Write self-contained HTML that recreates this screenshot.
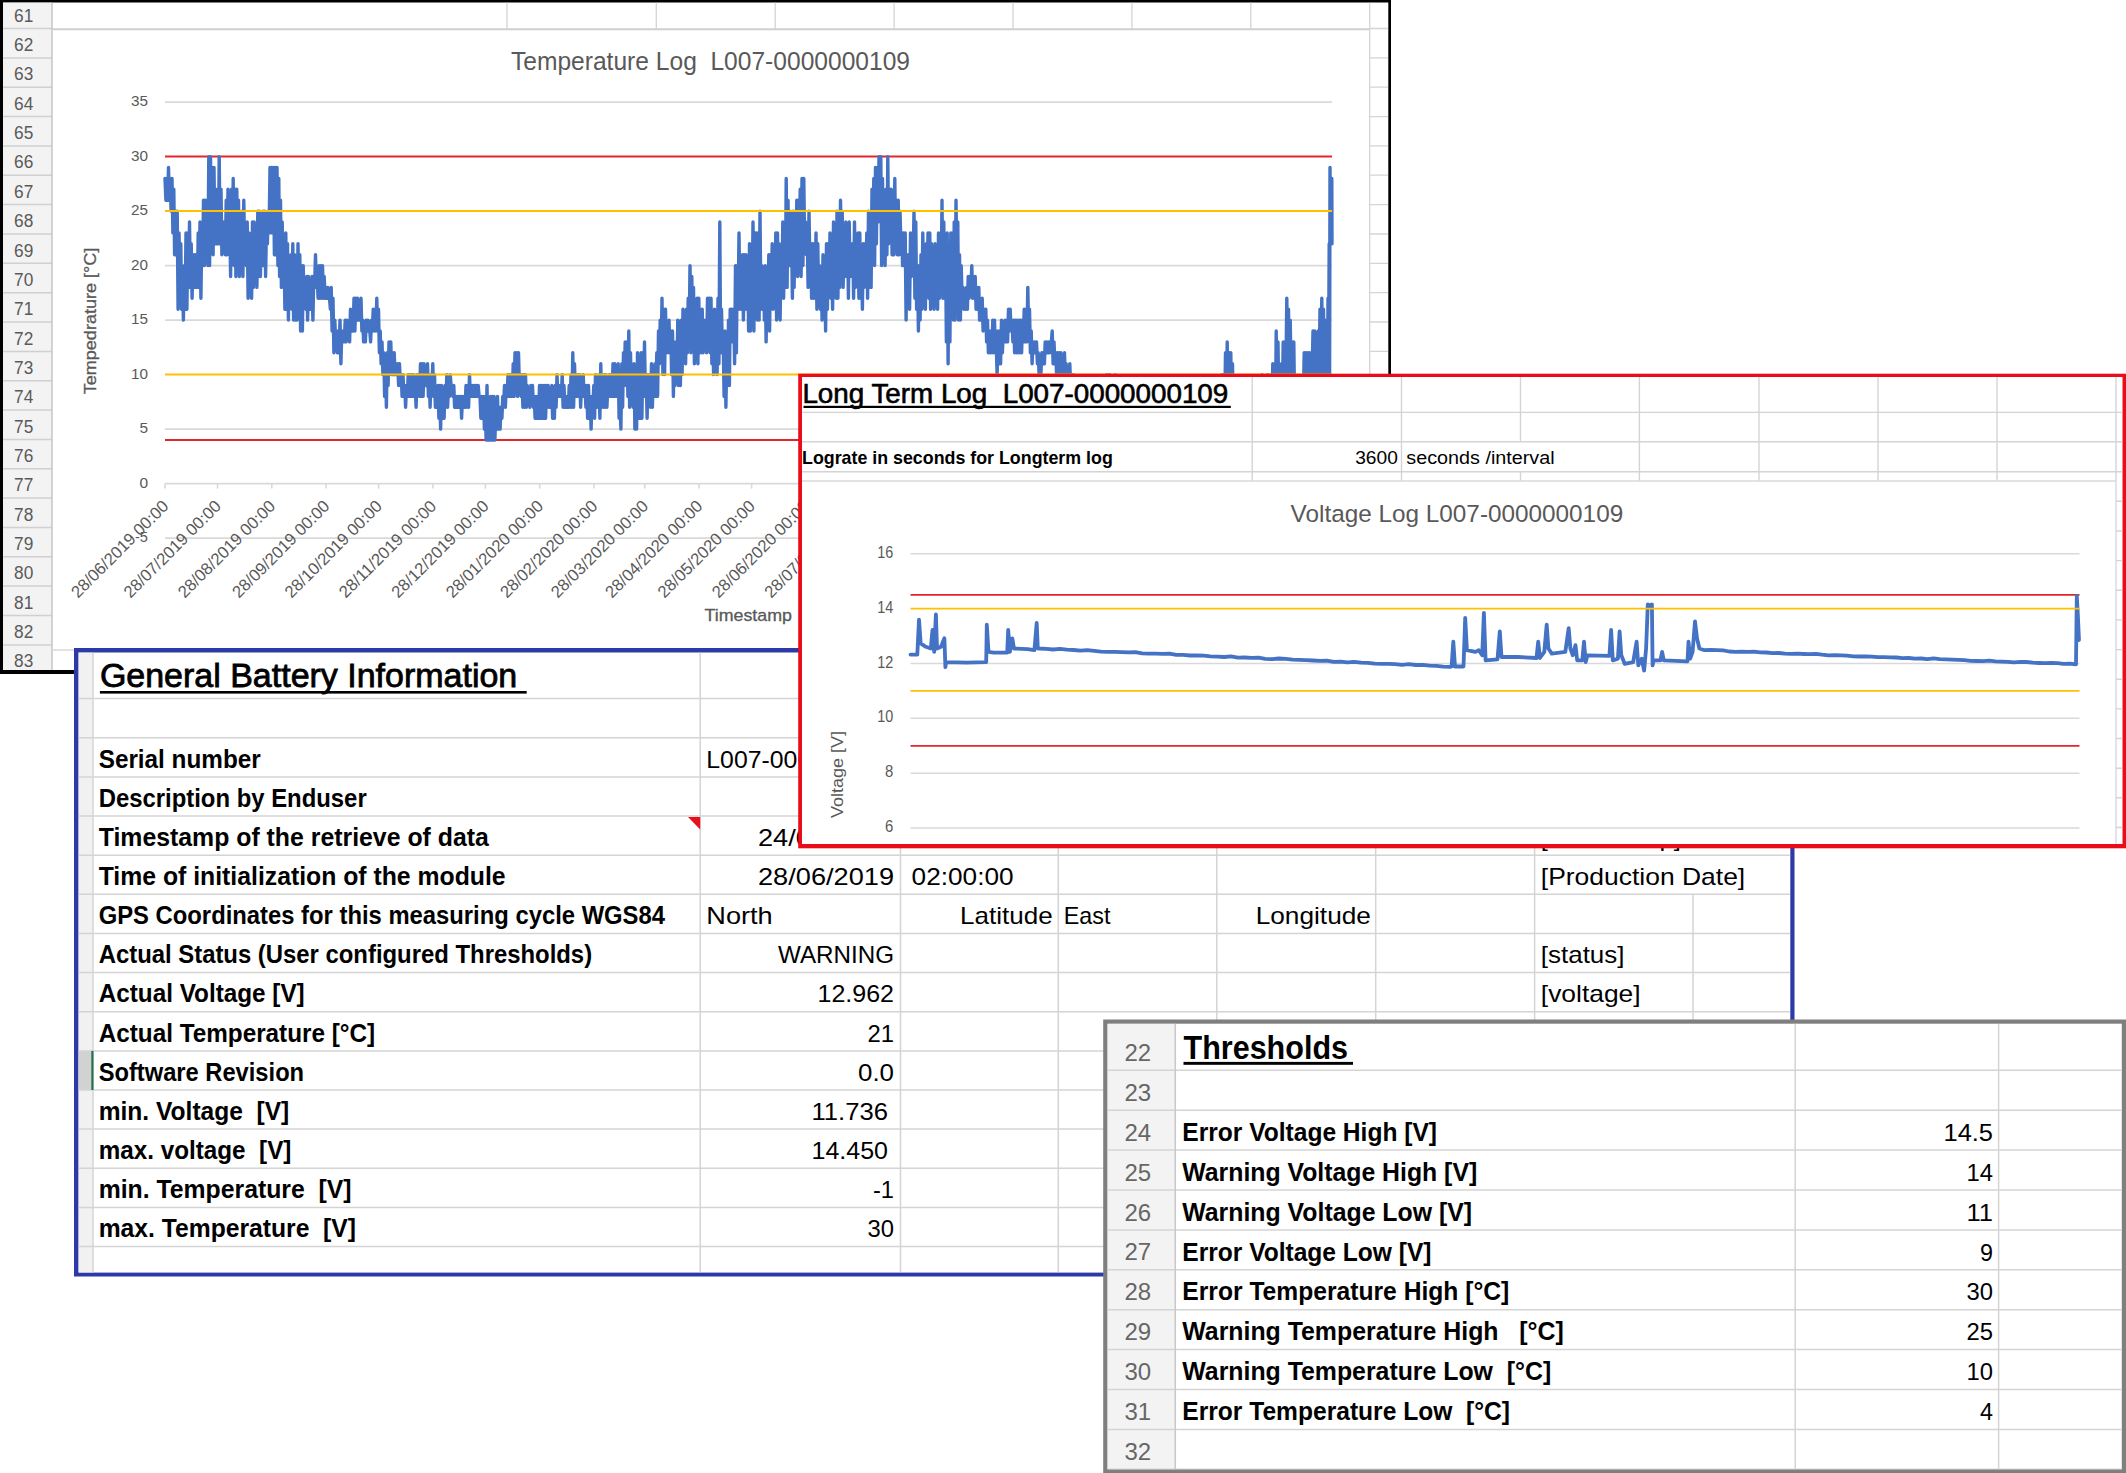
<!DOCTYPE html>
<html><head><meta charset="utf-8"><title>Battery Log</title>
<style>html,body{margin:0;padding:0;background:#fff}svg{display:block}text{white-space:pre;text-decoration-skip-ink:none}</style></head>
<body>
<svg width="2126" height="1473" viewBox="0 0 2126 1473" font-family="Liberation Sans, sans-serif" style="white-space:pre">
<defs>
<clipPath id="c1"><rect x="3" y="2.5" width="1385.3" height="667.5"/></clipPath>
<clipPath id="c2"><rect x="78.5" y="652.5" width="1711.8" height="620.1"/></clipPath>
<clipPath id="c3"><rect x="802" y="377" width="1320.5" height="467"/></clipPath>
<clipPath id="c4"><rect x="1107.5" y="1023.7" width="1014.3" height="445.6"/></clipPath>
</defs>
<rect x="0.0" y="0.0" width="2126.0" height="1473.0" fill="#fff"/>
<rect x="0.0" y="0.0" width="1391.0" height="674.0" fill="#000"/>
<rect x="3.0" y="2.5" width="1385.3" height="667.5" fill="#fff"/>
<g clip-path="url(#c1)">
<rect x="3.0" y="2.5" width="49.0" height="668.0" fill="#f3f3f3"/>
<line x1="3.0" y1="28.5" x2="52.0" y2="28.5" stroke="#d0d0d0" stroke-width="1.5"/>
<text x="23.7" y="21.7" font-size="18" text-anchor="middle" fill="#5a5a5a" textLength="19.2" lengthAdjust="spacingAndGlyphs">61</text>
<line x1="3.0" y1="57.9" x2="52.0" y2="57.9" stroke="#d0d0d0" stroke-width="1.5"/>
<text x="23.7" y="51.1" font-size="18" text-anchor="middle" fill="#5a5a5a" textLength="19.2" lengthAdjust="spacingAndGlyphs">62</text>
<line x1="3.0" y1="87.2" x2="52.0" y2="87.2" stroke="#d0d0d0" stroke-width="1.5"/>
<text x="23.7" y="80.4" font-size="18" text-anchor="middle" fill="#5a5a5a" textLength="19.2" lengthAdjust="spacingAndGlyphs">63</text>
<line x1="3.0" y1="116.6" x2="52.0" y2="116.6" stroke="#d0d0d0" stroke-width="1.5"/>
<text x="23.7" y="109.8" font-size="18" text-anchor="middle" fill="#5a5a5a" textLength="19.2" lengthAdjust="spacingAndGlyphs">64</text>
<line x1="3.0" y1="145.9" x2="52.0" y2="145.9" stroke="#d0d0d0" stroke-width="1.5"/>
<text x="23.7" y="139.1" font-size="18" text-anchor="middle" fill="#5a5a5a" textLength="19.2" lengthAdjust="spacingAndGlyphs">65</text>
<line x1="3.0" y1="175.2" x2="52.0" y2="175.2" stroke="#d0d0d0" stroke-width="1.5"/>
<text x="23.7" y="168.4" font-size="18" text-anchor="middle" fill="#5a5a5a" textLength="19.2" lengthAdjust="spacingAndGlyphs">66</text>
<line x1="3.0" y1="204.6" x2="52.0" y2="204.6" stroke="#d0d0d0" stroke-width="1.5"/>
<text x="23.7" y="197.8" font-size="18" text-anchor="middle" fill="#5a5a5a" textLength="19.2" lengthAdjust="spacingAndGlyphs">67</text>
<line x1="3.0" y1="234.0" x2="52.0" y2="234.0" stroke="#d0d0d0" stroke-width="1.5"/>
<text x="23.7" y="227.2" font-size="18" text-anchor="middle" fill="#5a5a5a" textLength="19.2" lengthAdjust="spacingAndGlyphs">68</text>
<line x1="3.0" y1="263.3" x2="52.0" y2="263.3" stroke="#d0d0d0" stroke-width="1.5"/>
<text x="23.7" y="256.5" font-size="18" text-anchor="middle" fill="#5a5a5a" textLength="19.2" lengthAdjust="spacingAndGlyphs">69</text>
<line x1="3.0" y1="292.7" x2="52.0" y2="292.7" stroke="#d0d0d0" stroke-width="1.5"/>
<text x="23.7" y="285.9" font-size="18" text-anchor="middle" fill="#5a5a5a" textLength="19.2" lengthAdjust="spacingAndGlyphs">70</text>
<line x1="3.0" y1="322.0" x2="52.0" y2="322.0" stroke="#d0d0d0" stroke-width="1.5"/>
<text x="23.7" y="315.2" font-size="18" text-anchor="middle" fill="#5a5a5a" textLength="19.2" lengthAdjust="spacingAndGlyphs">71</text>
<line x1="3.0" y1="351.4" x2="52.0" y2="351.4" stroke="#d0d0d0" stroke-width="1.5"/>
<text x="23.7" y="344.6" font-size="18" text-anchor="middle" fill="#5a5a5a" textLength="19.2" lengthAdjust="spacingAndGlyphs">72</text>
<line x1="3.0" y1="380.7" x2="52.0" y2="380.7" stroke="#d0d0d0" stroke-width="1.5"/>
<text x="23.7" y="373.9" font-size="18" text-anchor="middle" fill="#5a5a5a" textLength="19.2" lengthAdjust="spacingAndGlyphs">73</text>
<line x1="3.0" y1="410.1" x2="52.0" y2="410.1" stroke="#d0d0d0" stroke-width="1.5"/>
<text x="23.7" y="403.2" font-size="18" text-anchor="middle" fill="#5a5a5a" textLength="19.2" lengthAdjust="spacingAndGlyphs">74</text>
<line x1="3.0" y1="439.4" x2="52.0" y2="439.4" stroke="#d0d0d0" stroke-width="1.5"/>
<text x="23.7" y="432.6" font-size="18" text-anchor="middle" fill="#5a5a5a" textLength="19.2" lengthAdjust="spacingAndGlyphs">75</text>
<line x1="3.0" y1="468.8" x2="52.0" y2="468.8" stroke="#d0d0d0" stroke-width="1.5"/>
<text x="23.7" y="461.9" font-size="18" text-anchor="middle" fill="#5a5a5a" textLength="19.2" lengthAdjust="spacingAndGlyphs">76</text>
<line x1="3.0" y1="498.1" x2="52.0" y2="498.1" stroke="#d0d0d0" stroke-width="1.5"/>
<text x="23.7" y="491.3" font-size="18" text-anchor="middle" fill="#5a5a5a" textLength="19.2" lengthAdjust="spacingAndGlyphs">77</text>
<line x1="3.0" y1="527.5" x2="52.0" y2="527.5" stroke="#d0d0d0" stroke-width="1.5"/>
<text x="23.7" y="520.7" font-size="18" text-anchor="middle" fill="#5a5a5a" textLength="19.2" lengthAdjust="spacingAndGlyphs">78</text>
<line x1="3.0" y1="556.8" x2="52.0" y2="556.8" stroke="#d0d0d0" stroke-width="1.5"/>
<text x="23.7" y="550.0" font-size="18" text-anchor="middle" fill="#5a5a5a" textLength="19.2" lengthAdjust="spacingAndGlyphs">79</text>
<line x1="3.0" y1="586.1" x2="52.0" y2="586.1" stroke="#d0d0d0" stroke-width="1.5"/>
<text x="23.7" y="579.4" font-size="18" text-anchor="middle" fill="#5a5a5a" textLength="19.2" lengthAdjust="spacingAndGlyphs">80</text>
<line x1="3.0" y1="615.5" x2="52.0" y2="615.5" stroke="#d0d0d0" stroke-width="1.5"/>
<text x="23.7" y="608.7" font-size="18" text-anchor="middle" fill="#5a5a5a" textLength="19.2" lengthAdjust="spacingAndGlyphs">81</text>
<line x1="3.0" y1="644.9" x2="52.0" y2="644.9" stroke="#d0d0d0" stroke-width="1.5"/>
<text x="23.7" y="638.1" font-size="18" text-anchor="middle" fill="#5a5a5a" textLength="19.2" lengthAdjust="spacingAndGlyphs">82</text>
<line x1="3.0" y1="674.2" x2="52.0" y2="674.2" stroke="#d0d0d0" stroke-width="1.5"/>
<text x="23.7" y="667.4" font-size="18" text-anchor="middle" fill="#5a5a5a" textLength="19.2" lengthAdjust="spacingAndGlyphs">83</text>
<line x1="52.0" y1="2.5" x2="52.0" y2="670.0" stroke="#c6c6c6" stroke-width="1.5"/>
<line x1="507.0" y1="2.5" x2="507.0" y2="29.0" stroke="#d4d4d4" stroke-width="1.3"/>
<line x1="656.3" y1="2.5" x2="656.3" y2="29.0" stroke="#d4d4d4" stroke-width="1.3"/>
<line x1="775.2" y1="2.5" x2="775.2" y2="29.0" stroke="#d4d4d4" stroke-width="1.3"/>
<line x1="894.1" y1="2.5" x2="894.1" y2="29.0" stroke="#d4d4d4" stroke-width="1.3"/>
<line x1="1013.0" y1="2.5" x2="1013.0" y2="29.0" stroke="#d4d4d4" stroke-width="1.3"/>
<line x1="1131.9" y1="2.5" x2="1131.9" y2="29.0" stroke="#d4d4d4" stroke-width="1.3"/>
<line x1="1250.8" y1="2.5" x2="1250.8" y2="29.0" stroke="#d4d4d4" stroke-width="1.3"/>
<line x1="1369.7" y1="2.5" x2="1369.7" y2="670.0" stroke="#d4d4d4" stroke-width="1.3"/>
<line x1="1369.7" y1="28.5" x2="1388.3" y2="28.5" stroke="#d4d4d4" stroke-width="1.3"/>
<line x1="1369.7" y1="57.9" x2="1388.3" y2="57.9" stroke="#d4d4d4" stroke-width="1.3"/>
<line x1="1369.7" y1="87.2" x2="1388.3" y2="87.2" stroke="#d4d4d4" stroke-width="1.3"/>
<line x1="1369.7" y1="116.6" x2="1388.3" y2="116.6" stroke="#d4d4d4" stroke-width="1.3"/>
<line x1="1369.7" y1="145.9" x2="1388.3" y2="145.9" stroke="#d4d4d4" stroke-width="1.3"/>
<line x1="1369.7" y1="175.2" x2="1388.3" y2="175.2" stroke="#d4d4d4" stroke-width="1.3"/>
<line x1="1369.7" y1="204.6" x2="1388.3" y2="204.6" stroke="#d4d4d4" stroke-width="1.3"/>
<line x1="1369.7" y1="234.0" x2="1388.3" y2="234.0" stroke="#d4d4d4" stroke-width="1.3"/>
<line x1="1369.7" y1="263.3" x2="1388.3" y2="263.3" stroke="#d4d4d4" stroke-width="1.3"/>
<line x1="1369.7" y1="292.7" x2="1388.3" y2="292.7" stroke="#d4d4d4" stroke-width="1.3"/>
<line x1="1369.7" y1="322.0" x2="1388.3" y2="322.0" stroke="#d4d4d4" stroke-width="1.3"/>
<line x1="1369.7" y1="351.4" x2="1388.3" y2="351.4" stroke="#d4d4d4" stroke-width="1.3"/>
<line x1="1369.7" y1="380.7" x2="1388.3" y2="380.7" stroke="#d4d4d4" stroke-width="1.3"/>
<line x1="1369.7" y1="410.1" x2="1388.3" y2="410.1" stroke="#d4d4d4" stroke-width="1.3"/>
<line x1="1369.7" y1="439.4" x2="1388.3" y2="439.4" stroke="#d4d4d4" stroke-width="1.3"/>
<line x1="1369.7" y1="468.8" x2="1388.3" y2="468.8" stroke="#d4d4d4" stroke-width="1.3"/>
<line x1="1369.7" y1="498.1" x2="1388.3" y2="498.1" stroke="#d4d4d4" stroke-width="1.3"/>
<line x1="1369.7" y1="527.5" x2="1388.3" y2="527.5" stroke="#d4d4d4" stroke-width="1.3"/>
<line x1="1369.7" y1="556.8" x2="1388.3" y2="556.8" stroke="#d4d4d4" stroke-width="1.3"/>
<line x1="1369.7" y1="586.1" x2="1388.3" y2="586.1" stroke="#d4d4d4" stroke-width="1.3"/>
<line x1="1369.7" y1="615.5" x2="1388.3" y2="615.5" stroke="#d4d4d4" stroke-width="1.3"/>
<line x1="1369.7" y1="644.9" x2="1388.3" y2="644.9" stroke="#d4d4d4" stroke-width="1.3"/>
<line x1="1369.7" y1="674.2" x2="1388.3" y2="674.2" stroke="#d4d4d4" stroke-width="1.3"/>
<line x1="52.0" y1="29.3" x2="1369.7" y2="29.3" stroke="#cfcfcf" stroke-width="2"/>
<line x1="52.0" y1="650.0" x2="1369.7" y2="650.0" stroke="#d9d9d9" stroke-width="1.3"/>
<line x1="165.0" y1="102.1" x2="1332.0" y2="102.1" stroke="#d9d9d9" stroke-width="1.6"/>
<line x1="165.0" y1="265.6" x2="1332.0" y2="265.6" stroke="#d9d9d9" stroke-width="1.6"/>
<line x1="165.0" y1="320.1" x2="1332.0" y2="320.1" stroke="#d9d9d9" stroke-width="1.6"/>
<line x1="165.0" y1="429.1" x2="1332.0" y2="429.1" stroke="#d9d9d9" stroke-width="1.6"/>
<line x1="165.0" y1="483.6" x2="1332.0" y2="483.6" stroke="#d9d9d9" stroke-width="1.6"/>
<line x1="165.0" y1="538.1" x2="1332.0" y2="538.1" stroke="#d9d9d9" stroke-width="1.6"/>
<text x="148.0" y="106.0" font-size="15.5" text-anchor="end" fill="#595959" textLength="17.0" lengthAdjust="spacingAndGlyphs">35</text>
<text x="148.0" y="160.5" font-size="15.5" text-anchor="end" fill="#595959" textLength="17.0" lengthAdjust="spacingAndGlyphs">30</text>
<text x="148.0" y="215.0" font-size="15.5" text-anchor="end" fill="#595959" textLength="17.0" lengthAdjust="spacingAndGlyphs">25</text>
<text x="148.0" y="269.5" font-size="15.5" text-anchor="end" fill="#595959" textLength="17.0" lengthAdjust="spacingAndGlyphs">20</text>
<text x="148.0" y="324.0" font-size="15.5" text-anchor="end" fill="#595959" textLength="17.0" lengthAdjust="spacingAndGlyphs">15</text>
<text x="148.0" y="378.5" font-size="15.5" text-anchor="end" fill="#595959" textLength="17.0" lengthAdjust="spacingAndGlyphs">10</text>
<text x="148.0" y="433.0" font-size="15.5" text-anchor="end" fill="#595959" textLength="8.6" lengthAdjust="spacingAndGlyphs">5</text>
<text x="148.0" y="487.5" font-size="15.5" text-anchor="end" fill="#595959" textLength="8.6" lengthAdjust="spacingAndGlyphs">0</text>
<text x="148.0" y="542.0" font-size="15.5" text-anchor="end" fill="#595959" textLength="13.0" lengthAdjust="spacingAndGlyphs">-5</text>
<line x1="165.0" y1="483.6" x2="165.0" y2="488.6" stroke="#d9d9d9" stroke-width="1.6"/>
<line x1="217.5" y1="483.6" x2="217.5" y2="488.6" stroke="#d9d9d9" stroke-width="1.6"/>
<line x1="271.8" y1="483.6" x2="271.8" y2="488.6" stroke="#d9d9d9" stroke-width="1.6"/>
<line x1="326.1" y1="483.6" x2="326.1" y2="488.6" stroke="#d9d9d9" stroke-width="1.6"/>
<line x1="378.6" y1="483.6" x2="378.6" y2="488.6" stroke="#d9d9d9" stroke-width="1.6"/>
<line x1="432.9" y1="483.6" x2="432.9" y2="488.6" stroke="#d9d9d9" stroke-width="1.6"/>
<line x1="485.4" y1="483.6" x2="485.4" y2="488.6" stroke="#d9d9d9" stroke-width="1.6"/>
<line x1="539.7" y1="483.6" x2="539.7" y2="488.6" stroke="#d9d9d9" stroke-width="1.6"/>
<line x1="594.0" y1="483.6" x2="594.0" y2="488.6" stroke="#d9d9d9" stroke-width="1.6"/>
<line x1="644.8" y1="483.6" x2="644.8" y2="488.6" stroke="#d9d9d9" stroke-width="1.6"/>
<line x1="699.1" y1="483.6" x2="699.1" y2="488.6" stroke="#d9d9d9" stroke-width="1.6"/>
<line x1="751.6" y1="483.6" x2="751.6" y2="488.6" stroke="#d9d9d9" stroke-width="1.6"/>
<line x1="805.9" y1="483.6" x2="805.9" y2="488.6" stroke="#d9d9d9" stroke-width="1.6"/>
<line x1="858.4" y1="483.6" x2="858.4" y2="488.6" stroke="#d9d9d9" stroke-width="1.6"/>
<line x1="912.7" y1="483.6" x2="912.7" y2="488.6" stroke="#d9d9d9" stroke-width="1.6"/>
<line x1="967.0" y1="483.6" x2="967.0" y2="488.6" stroke="#d9d9d9" stroke-width="1.6"/>
<line x1="1019.5" y1="483.6" x2="1019.5" y2="488.6" stroke="#d9d9d9" stroke-width="1.6"/>
<line x1="1073.8" y1="483.6" x2="1073.8" y2="488.6" stroke="#d9d9d9" stroke-width="1.6"/>
<line x1="1126.3" y1="483.6" x2="1126.3" y2="488.6" stroke="#d9d9d9" stroke-width="1.6"/>
<line x1="1180.6" y1="483.6" x2="1180.6" y2="488.6" stroke="#d9d9d9" stroke-width="1.6"/>
<line x1="1234.9" y1="483.6" x2="1234.9" y2="488.6" stroke="#d9d9d9" stroke-width="1.6"/>
<line x1="1283.9" y1="483.6" x2="1283.9" y2="488.6" stroke="#d9d9d9" stroke-width="1.6"/>
<line x1="165.0" y1="156.6" x2="1332.0" y2="156.6" stroke="#e3262b" stroke-width="2"/>
<line x1="165.0" y1="440.0" x2="1332.0" y2="440.0" stroke="#e3262b" stroke-width="2"/>
<polyline fill="none" stroke="#4472c4" stroke-width="3.4" stroke-linejoin="round" stroke-linecap="round" points="165.0,178.4 165.9,200.2 166.8,178.4 167.6,200.2 168.5,167.5 169.4,200.2 170.2,178.4 171.1,211.1 172.0,178.4 172.9,232.9 173.8,189.3 174.6,254.7 175.5,211.1 176.4,254.7 177.2,211.1 178.1,309.2 179.0,232.9 179.9,276.5 180.8,243.8 181.6,309.2 182.5,276.5 183.4,320.1 184.2,265.6 185.1,309.2 186.0,232.9 186.9,309.2 187.8,232.9 188.6,287.4 189.5,222.0 190.4,287.4 191.2,243.8 192.1,298.3 193.0,254.7 193.9,287.4 194.8,254.7 195.6,287.4 196.5,254.7 197.4,287.4 198.2,232.9 199.1,287.4 200.0,222.0 200.9,298.3 201.8,232.9 202.6,265.6 203.5,200.2 204.4,265.6 205.2,200.2 206.1,243.8 207.0,200.2 207.9,265.6 208.8,156.6 209.6,265.6 210.5,156.6 211.4,232.9 212.2,167.5 213.1,254.7 214.0,167.5 214.9,243.8 215.8,189.3 216.6,243.8 217.5,200.2 218.4,243.8 219.2,156.6 220.1,243.8 221.0,189.3 221.9,254.7 222.8,222.0 223.6,243.8 224.5,222.0 225.4,254.7 226.2,200.2 227.1,254.7 228.0,189.3 228.9,243.8 229.8,222.0 230.6,276.5 231.5,189.3 232.4,254.7 233.2,178.4 234.1,265.6 235.0,189.3 235.9,276.5 236.8,189.3 237.6,254.7 238.5,200.2 239.4,276.5 240.2,222.0 241.1,254.7 242.0,211.1 242.9,276.5 243.8,200.2 244.6,254.7 245.5,232.9 246.4,265.6 247.2,222.0 248.1,298.3 249.0,232.9 249.9,276.5 250.8,254.7 251.6,298.3 252.5,222.0 253.4,287.4 254.2,222.0 255.1,276.5 256.0,232.9 256.9,287.4 257.8,211.1 258.6,276.5 259.5,211.1 260.4,276.5 261.2,232.9 262.1,265.6 263.0,211.1 263.9,265.6 264.8,211.1 265.6,276.5 266.5,222.0 267.4,243.8 268.2,211.1 269.1,232.9 270.0,167.5 270.9,232.9 271.8,167.5 272.6,232.9 273.5,167.5 274.4,254.7 275.2,167.5 276.1,254.7 277.0,167.5 277.9,265.6 278.8,178.4 279.6,276.5 280.5,200.2 281.4,287.4 282.2,222.0 283.1,276.5 284.0,243.8 284.9,309.2 285.8,232.9 286.6,309.2 287.5,243.8 288.4,320.1 289.2,265.6 290.1,287.4 291.0,254.7 291.9,309.2 292.8,243.8 293.6,320.1 294.5,254.7 295.4,320.1 296.2,265.6 297.1,320.1 298.0,243.8 298.9,298.3 299.8,254.7 300.6,331.0 301.5,265.6 302.4,331.0 303.2,265.6 304.1,298.3 305.0,287.4 305.9,309.2 306.8,276.5 307.6,320.1 308.5,276.5 309.4,309.2 310.2,287.4 311.1,309.2 312.0,276.5 312.9,320.1 313.8,276.5 314.6,287.4 315.5,254.7 316.4,287.4 317.2,276.5 318.1,298.3 319.0,265.6 319.9,298.3 320.8,265.6 321.6,298.3 322.5,265.6 323.4,298.3 324.2,276.5 325.1,298.3 326.0,287.4 326.9,298.3 327.8,287.4 328.6,298.3 329.5,298.3 330.4,309.2 331.2,287.4 332.1,331.0 333.0,298.3 333.9,352.8 334.8,320.1 335.6,341.9 336.5,331.0 337.4,352.8 338.2,331.0 339.1,352.8 340.0,320.1 340.9,363.7 341.8,331.0 342.6,341.9 343.5,331.0 344.4,341.9 345.2,320.1 346.1,341.9 347.0,320.1 347.9,331.0 348.8,331.0 349.6,341.9 350.5,309.2 351.4,331.0 352.2,320.1 353.1,331.0 354.0,298.3 354.9,331.0 355.8,298.3 356.6,320.1 357.5,298.3 358.4,320.1 359.2,309.2 360.1,320.1 361.0,298.3 361.9,331.0 362.8,320.1 363.6,341.9 364.5,331.0 365.4,341.9 366.2,320.1 367.1,331.0 368.0,320.1 368.9,331.0 369.8,331.0 370.6,341.9 371.5,320.1 372.4,331.0 373.2,309.2 374.1,331.0 375.0,309.2 375.9,331.0 376.8,298.3 377.6,331.0 378.5,309.2 379.4,352.8 380.2,331.0 381.1,363.7 382.0,341.9 382.9,374.6 383.8,352.8 384.6,396.4 385.5,363.7 386.4,407.3 387.2,352.8 388.1,385.5 389.0,341.9 389.9,363.7 390.8,341.9 391.6,374.6 392.5,352.8 393.4,374.6 394.2,352.8 395.1,374.6 396.0,363.7 396.9,374.6 397.8,363.7 398.6,385.5 399.5,363.7 400.4,385.5 401.2,374.6 402.1,396.4 403.0,374.6 403.9,396.4 404.8,385.5 405.6,407.3 406.5,385.5 407.4,396.4 408.2,374.6 409.1,396.4 410.0,374.6 410.9,396.4 411.8,374.6 412.6,396.4 413.5,374.6 414.4,396.4 415.2,385.5 416.1,407.3 417.0,374.6 417.9,385.5 418.8,374.6 419.6,396.4 420.5,363.7 421.4,396.4 422.2,363.7 423.1,396.4 424.0,363.7 424.9,385.5 425.8,374.6 426.6,385.5 427.5,363.7 428.4,396.4 429.2,374.6 430.1,407.3 431.0,374.6 431.9,385.5 432.8,363.7 433.6,396.4 434.5,374.6 435.4,407.3 436.2,396.4 437.1,407.3 438.0,385.5 438.9,418.2 439.8,385.5 440.6,429.1 441.5,385.5 442.4,418.2 443.2,396.4 444.1,418.2 445.0,385.5 445.9,407.3 446.8,374.6 447.6,407.3 448.5,385.5 449.4,396.4 450.2,374.6 451.1,385.5 452.0,385.5 452.9,396.4 453.8,385.5 454.6,407.3 455.5,396.4 456.4,407.3 457.2,396.4 458.1,407.3 459.0,396.4 459.9,407.3 460.8,396.4 461.6,418.2 462.5,396.4 463.4,407.3 464.2,396.4 465.1,407.3 466.0,385.5 466.9,407.3 467.8,385.5 468.6,407.3 469.5,374.6 470.4,396.4 471.2,385.5 472.1,396.4 473.0,385.5 473.9,396.4 474.8,385.5 475.6,396.4 476.5,385.5 477.4,396.4 478.2,385.5 479.1,396.4 480.0,396.4 480.9,418.2 481.8,396.4 482.6,418.2 483.5,396.4 484.4,429.1 485.2,396.4 486.1,440.0 487.0,385.5 487.9,440.0 488.8,407.3 489.6,440.0 490.5,396.4 491.4,440.0 492.2,396.4 493.1,440.0 494.0,396.4 494.9,440.0 495.8,407.3 496.6,429.1 497.5,396.4 498.4,429.1 499.2,407.3 500.1,429.1 501.0,407.3 501.9,418.2 502.8,396.4 503.6,407.3 504.5,385.5 505.4,407.3 506.2,385.5 507.1,396.4 508.0,374.6 508.9,396.4 509.8,374.6 510.6,396.4 511.5,374.6 512.4,396.4 513.2,363.7 514.1,396.4 515.0,352.8 515.9,385.5 516.8,352.8 517.6,396.4 518.5,352.8 519.4,385.5 520.2,374.6 521.1,396.4 522.0,374.6 522.9,407.3 523.8,374.6 524.6,407.3 525.5,374.6 526.4,407.3 527.2,385.5 528.1,396.4 529.0,396.4 529.9,407.3 530.8,385.5 531.6,396.4 532.5,385.5 533.4,407.3 534.2,396.4 535.1,418.2 536.0,396.4 536.9,418.2 537.8,396.4 538.6,418.2 539.5,385.5 540.4,418.2 541.2,385.5 542.1,418.2 543.0,385.5 543.9,418.2 544.8,385.5 545.6,418.2 546.5,385.5 547.4,407.3 548.2,385.5 549.1,407.3 550.0,396.4 550.9,407.3 551.8,385.5 552.6,418.2 553.5,396.4 554.4,418.2 555.2,385.5 556.1,407.3 557.0,374.6 557.9,396.4 558.8,385.5 559.6,396.4 560.5,385.5 561.4,396.4 562.2,374.6 563.1,407.3 564.0,385.5 564.9,407.3 565.8,396.4 566.6,407.3 567.5,396.4 568.4,407.3 569.2,385.5 570.1,407.3 571.0,374.6 571.9,407.3 572.8,352.8 573.6,407.3 574.5,363.7 575.4,396.4 576.2,374.6 577.1,396.4 578.0,374.6 578.9,396.4 579.8,374.6 580.6,407.3 581.5,385.5 582.4,396.4 583.2,374.6 584.1,396.4 585.0,385.5 585.9,407.3 586.8,385.5 587.6,418.2 588.5,385.5 589.4,418.2 590.2,396.4 591.1,429.1 592.0,396.4 592.9,407.3 593.8,385.5 594.6,418.2 595.5,374.6 596.4,407.3 597.2,385.5 598.1,407.3 599.0,374.6 599.9,418.2 600.8,363.7 601.6,407.3 602.5,385.5 603.4,407.3 604.2,374.6 605.1,407.3 606.0,374.6 606.9,407.3 607.8,385.5 608.6,396.4 609.5,374.6 610.4,396.4 611.2,374.6 612.1,396.4 613.0,363.7 613.9,396.4 614.8,363.7 615.6,396.4 616.5,374.6 617.4,396.4 618.2,363.7 619.1,418.2 620.0,396.4 620.9,429.1 621.8,363.7 622.6,407.3 623.5,352.8 624.4,374.6 625.2,341.9 626.1,385.5 627.0,341.9 627.9,396.4 628.8,331.0 629.6,407.3 630.5,352.8 631.4,396.4 632.2,374.6 633.1,407.3 634.0,363.7 634.9,429.1 635.8,374.6 636.6,429.1 637.5,352.8 638.4,418.2 639.2,363.7 640.1,418.2 641.0,352.8 641.9,418.2 642.8,352.8 643.6,396.4 644.5,341.9 645.4,396.4 646.2,374.6 647.1,418.2 648.0,374.6 648.9,396.4 649.8,374.6 650.6,407.3 651.5,363.7 652.4,407.3 653.2,374.6 654.1,396.4 655.0,363.7 655.9,396.4 656.8,352.8 657.6,396.4 658.5,331.0 659.4,363.7 660.2,320.1 661.1,352.8 662.0,298.3 662.9,374.6 663.8,309.2 664.6,374.6 665.5,309.2 666.4,352.8 667.2,331.0 668.1,352.8 669.0,320.1 669.9,352.8 670.8,331.0 671.6,374.6 672.5,331.0 673.4,396.4 674.2,341.9 675.1,385.5 676.0,341.9 676.9,374.6 677.8,320.1 678.6,385.5 679.5,341.9 680.4,385.5 681.2,320.1 682.1,374.6 683.0,309.2 683.9,352.8 684.8,331.0 685.6,363.7 686.5,309.2 687.4,352.8 688.2,298.3 689.1,341.9 690.0,265.6 690.9,352.8 691.8,276.5 692.6,331.0 693.5,287.4 694.4,363.7 695.2,309.2 696.1,331.0 697.0,298.3 697.9,363.7 698.8,298.3 699.6,352.8 700.5,309.2 701.4,352.8 702.2,309.2 703.1,352.8 704.0,320.1 704.9,341.9 705.8,320.1 706.6,352.8 707.5,298.3 708.4,341.9 709.2,298.3 710.1,352.8 711.0,298.3 711.9,363.7 712.8,331.0 713.6,374.6 714.5,309.2 715.4,352.8 716.2,320.1 717.1,374.6 718.0,298.3 718.9,363.7 719.8,222.0 720.6,352.8 721.5,309.2 722.4,352.8 723.2,341.9 724.1,396.4 725.0,331.0 725.9,407.3 726.8,352.8 727.6,385.5 728.5,320.1 729.4,385.5 730.2,309.2 731.1,341.9 732.0,309.2 732.9,341.9 733.8,309.2 734.6,363.7 735.5,265.6 736.4,352.8 737.2,265.6 738.1,309.2 739.0,232.9 739.9,309.2 740.8,265.6 741.6,309.2 742.5,254.7 743.4,320.1 744.2,254.7 745.1,309.2 746.0,254.7 746.9,309.2 747.8,265.6 748.6,331.0 749.5,243.8 750.4,331.0 751.2,254.7 752.1,309.2 753.0,222.0 753.9,331.0 754.8,232.9 755.6,309.2 756.5,232.9 757.4,320.1 758.2,232.9 759.1,320.1 760.0,211.1 760.9,309.2 761.8,265.6 762.6,309.2 763.5,276.5 764.4,320.1 765.2,265.6 766.1,341.9 767.0,287.4 767.9,309.2 768.8,254.7 769.6,331.0 770.5,254.7 771.4,298.3 772.2,243.8 773.1,309.2 774.0,254.7 774.9,287.4 775.8,232.9 776.6,320.1 777.5,232.9 778.4,309.2 779.2,243.8 780.1,320.1 781.0,254.7 781.9,287.4 782.8,222.0 783.6,298.3 784.5,232.9 785.4,287.4 786.2,178.4 787.1,287.4 788.0,200.2 788.9,265.6 789.8,211.1 790.6,265.6 791.5,232.9 792.4,298.3 793.2,211.1 794.1,287.4 795.0,222.0 795.9,254.7 796.8,200.2 797.6,276.5 798.5,200.2 799.4,243.8 800.2,189.3 801.1,276.5 802.0,178.4 802.9,265.6 803.8,178.4 804.6,243.8 805.5,222.0 806.4,254.7 807.2,232.9 808.1,287.4 809.0,211.1 809.9,265.6 810.8,243.8 811.6,298.3 812.5,243.8 813.4,298.3 814.2,243.8 815.1,298.3 816.0,232.9 816.9,309.2 817.8,243.8 818.6,298.3 819.5,265.6 820.4,309.2 821.2,276.5 822.1,320.1 823.0,254.7 823.9,298.3 824.8,276.5 825.6,331.0 826.5,243.8 827.4,309.2 828.2,243.8 829.1,287.4 830.0,232.9 830.9,298.3 831.8,254.7 832.6,309.2 833.5,222.0 834.4,276.5 835.2,232.9 836.1,298.3 837.0,211.1 837.9,298.3 838.8,232.9 839.6,287.4 840.5,200.2 841.4,254.7 842.2,211.1 843.1,287.4 844.0,243.8 844.9,276.5 845.8,222.0 846.6,276.5 847.5,232.9 848.4,298.3 849.2,222.0 850.1,276.5 851.0,243.8 851.9,276.5 852.8,243.8 853.6,298.3 854.5,222.0 855.4,287.4 856.2,254.7 857.1,265.6 858.0,232.9 858.9,298.3 859.8,232.9 860.6,298.3 861.5,254.7 862.4,309.2 863.2,243.8 864.1,287.4 865.0,243.8 865.9,276.5 866.8,232.9 867.6,298.3 868.5,211.1 869.4,287.4 870.2,222.0 871.1,287.4 872.0,189.3 872.9,243.8 873.8,178.4 874.6,265.6 875.5,167.5 876.4,243.8 877.2,167.5 878.1,222.0 879.0,156.6 879.9,211.1 880.8,156.6 881.6,265.6 882.5,178.4 883.4,254.7 884.2,211.1 885.1,265.6 886.0,189.3 886.9,254.7 887.8,156.6 888.6,243.8 889.5,189.3 890.4,232.9 891.2,189.3 892.1,254.7 893.0,200.2 893.9,254.7 894.8,178.4 895.6,243.8 896.5,200.2 897.4,254.7 898.2,200.2 899.1,254.7 900.0,211.1 900.9,243.8 901.8,232.9 902.6,265.6 903.5,232.9 904.4,265.6 905.2,232.9 906.1,320.1 907.0,254.7 907.9,298.3 908.8,254.7 909.6,309.2 910.5,232.9 911.4,276.5 912.2,243.8 913.1,265.6 914.0,211.1 914.9,298.3 915.8,222.0 916.6,309.2 917.5,265.6 918.4,331.0 919.2,265.6 920.1,320.1 921.0,254.7 921.9,309.2 922.8,232.9 923.6,287.4 924.5,265.6 925.4,309.2 926.2,243.8 927.1,287.4 928.0,232.9 928.9,298.3 929.8,232.9 930.6,309.2 931.5,243.8 932.4,298.3 933.2,254.7 934.1,309.2 935.0,243.8 935.9,298.3 936.8,254.7 937.6,309.2 938.5,232.9 939.4,298.3 940.2,243.8 941.1,287.4 942.0,200.2 942.9,298.3 943.8,222.0 944.6,298.3 945.5,243.8 946.4,341.9 947.2,232.9 948.1,363.7 949.0,243.8 949.9,341.9 950.8,232.9 951.6,298.3 952.5,232.9 953.4,320.1 954.2,222.0 955.1,320.1 956.0,200.2 956.9,265.6 957.8,222.0 958.6,320.1 959.5,254.7 960.4,320.1 961.2,265.6 962.1,298.3 963.0,287.4 963.9,309.2 964.8,298.3 965.6,309.2 966.5,287.4 967.4,309.2 968.2,276.5 969.1,298.3 970.0,276.5 970.9,287.4 971.8,265.6 972.6,298.3 973.5,276.5 974.4,298.3 975.2,276.5 976.1,309.2 977.0,287.4 977.9,309.2 978.8,287.4 979.6,320.1 980.5,309.2 981.4,320.1 982.2,298.3 983.1,331.0 984.0,309.2 984.9,320.1 985.8,309.2 986.6,341.9 987.5,320.1 988.4,352.8 989.2,331.0 990.1,352.8 991.0,331.0 991.9,352.8 992.8,320.1 993.6,352.8 994.5,320.1 995.4,352.8 996.2,341.9 997.1,374.6 998.0,331.0 998.9,363.7 999.8,331.0 1000.6,363.7 1001.5,320.1 1002.4,352.8 1003.2,331.0 1004.1,341.9 1005.0,320.1 1005.9,341.9 1006.8,320.1 1007.6,341.9 1008.5,309.2 1009.4,331.0 1010.2,309.2 1011.1,331.0 1012.0,320.1 1012.9,341.9 1013.8,320.1 1014.6,352.8 1015.5,320.1 1016.4,352.8 1017.2,320.1 1018.1,352.8 1019.0,320.1 1019.9,352.8 1020.8,320.1 1021.6,352.8 1022.5,320.1 1023.4,341.9 1024.2,309.2 1025.1,341.9 1026.0,309.2 1026.9,341.9 1027.8,287.4 1028.6,331.0 1029.5,309.2 1030.4,352.8 1031.2,331.0 1032.1,363.7 1033.0,341.9 1033.9,352.8 1034.8,341.9 1035.6,352.8 1036.5,341.9 1037.4,363.7 1038.2,352.8 1039.1,374.6 1040.0,363.7 1040.9,374.6 1041.8,352.8 1042.6,363.7 1043.5,352.8 1044.4,363.7 1045.2,341.9 1046.1,352.8 1047.0,341.9 1047.9,352.8 1048.8,341.9 1049.6,352.8 1050.5,341.9 1051.4,341.9 1052.2,331.0 1053.1,363.7 1054.0,341.9 1054.9,363.7 1055.8,352.8 1056.6,374.6 1057.5,352.8 1058.4,374.6 1059.2,352.8 1060.1,374.6 1061.0,352.8 1061.9,385.5 1062.8,363.7 1063.6,385.5 1064.5,352.8 1065.4,385.5 1066.2,363.7 1067.1,385.5 1068.0,374.6 1068.9,385.5 1069.8,363.7 1070.6,385.5 1071.5,374.6 1072.4,396.4 1073.2,374.6 1074.1,407.3 1075.0,385.5 1075.9,407.3 1076.8,385.5 1077.6,407.3 1078.5,385.5 1079.4,407.3 1080.2,396.4 1081.1,418.2 1082.0,396.4 1082.9,418.2 1083.8,396.4 1084.6,418.2 1085.5,385.5 1086.4,407.3 1087.2,385.5 1088.1,418.2 1089.0,396.4 1089.9,418.2 1090.8,396.4 1091.6,418.2 1092.5,396.4 1093.4,407.3 1094.2,396.4 1095.1,418.2 1096.0,385.5 1096.9,429.1 1097.8,385.5 1098.6,429.1 1099.5,396.4 1100.4,418.2 1101.2,396.4 1102.1,407.3 1103.0,385.5 1103.9,429.1 1104.8,385.5 1105.6,429.1 1106.5,374.6 1107.4,429.1 1108.2,374.6 1109.1,429.1 1110.0,374.6 1110.9,418.2 1111.8,385.5 1112.6,440.0 1113.5,385.5 1114.4,429.1 1115.2,374.6 1116.1,418.2 1117.0,385.5 1117.9,440.0 1118.8,385.5 1119.6,429.1 1120.5,407.3 1121.4,429.1 1122.2,396.4 1123.1,440.0 1124.0,396.4 1124.9,440.0 1125.8,407.3 1126.6,450.9 1127.5,407.3 1128.4,450.9 1129.2,418.2 1130.1,440.0 1131.0,407.3 1131.9,440.0 1132.8,407.3 1133.6,450.9 1134.5,407.3 1135.4,461.8 1136.2,407.3 1137.1,440.0 1138.0,407.3 1138.9,450.9 1139.8,429.1 1140.6,461.8 1141.5,418.2 1142.4,450.9 1143.2,418.2 1144.1,450.9 1145.0,429.1 1145.9,461.8 1146.8,418.2 1147.6,461.8 1148.5,418.2 1149.4,450.9 1150.2,440.0 1151.1,461.8 1152.0,418.2 1152.9,450.9 1153.8,440.0 1154.6,472.7 1155.5,440.0 1156.4,472.7 1157.2,429.1 1158.1,472.7 1159.0,429.1 1159.9,472.7 1160.8,429.1 1161.6,461.8 1162.5,440.0 1163.4,461.8 1164.2,440.0 1165.1,472.7 1166.0,440.0 1166.9,472.7 1167.8,440.0 1168.6,472.7 1169.5,429.1 1170.4,472.7 1171.2,450.9 1172.1,483.6 1173.0,450.9 1173.9,483.6 1174.8,429.1 1175.6,483.6 1176.5,440.0 1177.4,461.8 1178.2,440.0 1179.1,483.6 1180.0,450.9 1180.9,483.6 1181.8,429.1 1182.6,461.8 1183.5,440.0 1184.4,472.7 1185.2,440.0 1186.1,461.8 1187.0,429.1 1187.9,472.7 1188.8,440.0 1189.6,472.7 1190.5,429.1 1191.4,472.7 1192.2,429.1 1193.1,483.6 1194.0,418.2 1194.9,472.7 1195.8,418.2 1196.6,461.8 1197.5,418.2 1198.4,483.6 1199.2,418.2 1200.1,461.8 1201.0,418.2 1201.9,483.6 1202.8,407.3 1203.6,483.6 1204.5,429.1 1205.4,461.8 1206.2,429.1 1207.1,461.8 1208.0,407.3 1208.9,461.8 1209.8,418.2 1210.6,450.9 1211.5,429.1 1212.4,440.0 1213.2,407.3 1214.1,440.0 1215.0,418.2 1215.9,440.0 1216.8,396.4 1217.6,450.9 1218.5,396.4 1219.4,450.9 1220.2,396.4 1221.1,407.3 1222.0,374.6 1222.9,407.3 1223.8,374.6 1224.6,418.2 1225.5,352.8 1226.4,418.2 1227.2,341.9 1228.1,418.2 1229.0,352.8 1229.9,418.2 1230.8,352.8 1231.6,418.2 1232.5,363.7 1233.4,418.2 1234.2,385.5 1235.1,429.1 1236.0,407.3 1236.9,429.1 1237.8,407.3 1238.6,429.1 1239.5,385.5 1240.4,440.0 1241.2,396.4 1242.1,429.1 1243.0,396.4 1243.9,429.1 1244.8,396.4 1245.6,440.0 1246.5,407.3 1247.4,450.9 1248.2,407.3 1249.1,450.9 1250.0,385.5 1250.9,450.9 1251.8,407.3 1252.6,418.2 1253.5,385.5 1254.4,440.0 1255.2,396.4 1256.1,429.1 1257.0,385.5 1257.9,429.1 1258.8,385.5 1259.6,418.2 1260.5,385.5 1261.4,407.3 1262.2,374.6 1263.1,429.1 1264.0,385.5 1264.9,429.1 1265.8,385.5 1266.6,429.1 1267.5,374.6 1268.4,418.2 1269.2,385.5 1270.1,407.3 1271.0,374.6 1271.9,418.2 1272.8,363.7 1273.6,418.2 1274.5,374.6 1275.4,418.2 1276.2,331.0 1277.1,418.2 1278.0,341.9 1278.9,418.2 1279.8,374.6 1280.6,407.3 1281.5,363.7 1282.4,396.4 1283.2,341.9 1284.1,396.4 1285.0,341.9 1285.9,374.6 1286.8,298.3 1287.6,374.6 1288.5,309.2 1289.4,396.4 1290.2,320.1 1291.1,374.6 1292.0,341.9 1292.9,385.5 1293.8,341.9 1294.6,407.3 1295.5,385.5 1296.4,418.2 1297.2,385.5 1298.1,418.2 1299.0,396.4 1299.9,429.1 1300.8,385.5 1301.6,418.2 1302.5,385.5 1303.4,396.4 1304.2,352.8 1305.1,407.3 1306.0,352.8 1306.9,396.4 1307.8,352.8 1308.6,396.4 1309.5,352.8 1310.4,396.4 1311.2,363.7 1312.1,374.6 1313.0,331.0 1313.9,363.7 1314.8,331.0 1315.6,385.5 1316.5,352.8 1317.4,363.7 1318.2,331.0 1319.1,374.6 1320.0,309.2 1320.9,363.7 1321.8,298.3 1322.6,385.5 1323.5,309.2 1324.4,385.5 1325.2,320.1 1326.1,363.7 1327.0,320.1 1327.5,385.5 1328,298.3 1328.6,352.8 1329.2,243.8 1329.6,374.6 1330,167.5 1330.6,243.8 1331,178.4 1331.4,211.1 1331.8,178.4 1332,243.8"/>
<line x1="165.0" y1="211.1" x2="1332.0" y2="211.1" stroke="#ffc000" stroke-width="2"/>
<line x1="165.0" y1="374.6" x2="1332.0" y2="374.6" stroke="#ffc000" stroke-width="2"/>
<text transform="translate(169.5,507.3) rotate(-45)" font-size="16.8" text-anchor="end" fill="#595959" textLength="129.5" lengthAdjust="spacingAndGlyphs">28/06/2019 00:00</text>
<text transform="translate(222.0,507.3) rotate(-45)" font-size="16.8" text-anchor="end" fill="#595959" textLength="129.5" lengthAdjust="spacingAndGlyphs">28/07/2019 00:00</text>
<text transform="translate(276.3,507.3) rotate(-45)" font-size="16.8" text-anchor="end" fill="#595959" textLength="129.5" lengthAdjust="spacingAndGlyphs">28/08/2019 00:00</text>
<text transform="translate(330.6,507.3) rotate(-45)" font-size="16.8" text-anchor="end" fill="#595959" textLength="129.5" lengthAdjust="spacingAndGlyphs">28/09/2019 00:00</text>
<text transform="translate(383.1,507.3) rotate(-45)" font-size="16.8" text-anchor="end" fill="#595959" textLength="129.5" lengthAdjust="spacingAndGlyphs">28/10/2019 00:00</text>
<text transform="translate(437.4,507.3) rotate(-45)" font-size="16.8" text-anchor="end" fill="#595959" textLength="129.5" lengthAdjust="spacingAndGlyphs">28/11/2019 00:00</text>
<text transform="translate(489.9,507.3) rotate(-45)" font-size="16.8" text-anchor="end" fill="#595959" textLength="129.5" lengthAdjust="spacingAndGlyphs">28/12/2019 00:00</text>
<text transform="translate(544.2,507.3) rotate(-45)" font-size="16.8" text-anchor="end" fill="#595959" textLength="129.5" lengthAdjust="spacingAndGlyphs">28/01/2020 00:00</text>
<text transform="translate(598.5,507.3) rotate(-45)" font-size="16.8" text-anchor="end" fill="#595959" textLength="129.5" lengthAdjust="spacingAndGlyphs">28/02/2020 00:00</text>
<text transform="translate(649.3,507.3) rotate(-45)" font-size="16.8" text-anchor="end" fill="#595959" textLength="129.5" lengthAdjust="spacingAndGlyphs">28/03/2020 00:00</text>
<text transform="translate(703.6,507.3) rotate(-45)" font-size="16.8" text-anchor="end" fill="#595959" textLength="129.5" lengthAdjust="spacingAndGlyphs">28/04/2020 00:00</text>
<text transform="translate(756.1,507.3) rotate(-45)" font-size="16.8" text-anchor="end" fill="#595959" textLength="129.5" lengthAdjust="spacingAndGlyphs">28/05/2020 00:00</text>
<text transform="translate(810.4,507.3) rotate(-45)" font-size="16.8" text-anchor="end" fill="#595959" textLength="129.5" lengthAdjust="spacingAndGlyphs">28/06/2020 00:00</text>
<text transform="translate(862.9,507.3) rotate(-45)" font-size="16.8" text-anchor="end" fill="#595959" textLength="129.5" lengthAdjust="spacingAndGlyphs">28/07/2020 00:00</text>
<text transform="translate(917.2,507.3) rotate(-45)" font-size="16.8" text-anchor="end" fill="#595959" textLength="129.5" lengthAdjust="spacingAndGlyphs">28/08/2020 00:00</text>
<text transform="translate(971.5,507.3) rotate(-45)" font-size="16.8" text-anchor="end" fill="#595959" textLength="129.5" lengthAdjust="spacingAndGlyphs">28/09/2020 00:00</text>
<text transform="translate(1024.0,507.3) rotate(-45)" font-size="16.8" text-anchor="end" fill="#595959" textLength="129.5" lengthAdjust="spacingAndGlyphs">28/10/2020 00:00</text>
<text transform="translate(1078.3,507.3) rotate(-45)" font-size="16.8" text-anchor="end" fill="#595959" textLength="129.5" lengthAdjust="spacingAndGlyphs">28/11/2020 00:00</text>
<text transform="translate(1130.8,507.3) rotate(-45)" font-size="16.8" text-anchor="end" fill="#595959" textLength="129.5" lengthAdjust="spacingAndGlyphs">28/12/2020 00:00</text>
<text transform="translate(1185.1,507.3) rotate(-45)" font-size="16.8" text-anchor="end" fill="#595959" textLength="129.5" lengthAdjust="spacingAndGlyphs">28/01/2021 00:00</text>
<text transform="translate(1239.4,507.3) rotate(-45)" font-size="16.8" text-anchor="end" fill="#595959" textLength="129.5" lengthAdjust="spacingAndGlyphs">28/02/2021 00:00</text>
<text transform="translate(1288.4,507.3) rotate(-45)" font-size="16.8" text-anchor="end" fill="#595959" textLength="129.5" lengthAdjust="spacingAndGlyphs">28/03/2021 00:00</text>
<text x="511.0" y="70.0" font-size="25.5" fill="#595959" textLength="399.0" lengthAdjust="spacingAndGlyphs">Temperature Log  L007-0000000109</text>
<text transform="translate(96.1,321) rotate(-90)" font-size="16.3" stroke="#595959" stroke-width="0.3" text-anchor="middle" fill="#595959" textLength="146.7" lengthAdjust="spacingAndGlyphs">Tempedrature [°C]</text>
<text x="704.5" y="620.6" font-size="16.2" fill="#595959" textLength="87.4" lengthAdjust="spacingAndGlyphs" stroke="#595959" stroke-width="0.3">Timestamp</text>
</g>
<rect x="74.0" y="648.0" width="1720.5" height="628.5" fill="#2b3aa6"/>
<rect x="78.5" y="652.5" width="1711.8" height="620.1" fill="#fff"/>
<g clip-path="url(#c2)">
<rect x="78.5" y="652.5" width="14.5" height="620.1" fill="#f1f1f1"/>
<rect x="78.5" y="1050.9" width="13.0" height="39.1" fill="#d2d2d2"/>
<line x1="78.5" y1="698.6" x2="1790.3" y2="698.6" stroke="#d4d4d4" stroke-width="1.5"/>
<line x1="78.5" y1="737.7" x2="1790.3" y2="737.7" stroke="#d4d4d4" stroke-width="1.5"/>
<line x1="78.5" y1="776.9" x2="1790.3" y2="776.9" stroke="#d4d4d4" stroke-width="1.5"/>
<line x1="78.5" y1="816.0" x2="1790.3" y2="816.0" stroke="#d4d4d4" stroke-width="1.5"/>
<line x1="78.5" y1="855.2" x2="1790.3" y2="855.2" stroke="#d4d4d4" stroke-width="1.5"/>
<line x1="78.5" y1="894.3" x2="1790.3" y2="894.3" stroke="#d4d4d4" stroke-width="1.5"/>
<line x1="78.5" y1="933.4" x2="1790.3" y2="933.4" stroke="#d4d4d4" stroke-width="1.5"/>
<line x1="78.5" y1="972.6" x2="1790.3" y2="972.6" stroke="#d4d4d4" stroke-width="1.5"/>
<line x1="78.5" y1="1011.7" x2="1790.3" y2="1011.7" stroke="#d4d4d4" stroke-width="1.5"/>
<line x1="78.5" y1="1050.9" x2="1790.3" y2="1050.9" stroke="#d4d4d4" stroke-width="1.5"/>
<line x1="78.5" y1="1090.0" x2="1790.3" y2="1090.0" stroke="#d4d4d4" stroke-width="1.5"/>
<line x1="78.5" y1="1129.1" x2="1790.3" y2="1129.1" stroke="#d4d4d4" stroke-width="1.5"/>
<line x1="78.5" y1="1168.3" x2="1790.3" y2="1168.3" stroke="#d4d4d4" stroke-width="1.5"/>
<line x1="78.5" y1="1207.4" x2="1790.3" y2="1207.4" stroke="#d4d4d4" stroke-width="1.5"/>
<line x1="78.5" y1="1246.6" x2="1790.3" y2="1246.6" stroke="#d4d4d4" stroke-width="1.5"/>
<line x1="93.0" y1="652.5" x2="93.0" y2="1272.6" stroke="#d4d4d4" stroke-width="1.5"/>
<line x1="700.2" y1="652.5" x2="700.2" y2="1272.6" stroke="#d4d4d4" stroke-width="1.5"/>
<line x1="900.5" y1="652.5" x2="900.5" y2="1272.6" stroke="#d4d4d4" stroke-width="1.5"/>
<line x1="1058.3" y1="652.5" x2="1058.3" y2="1272.6" stroke="#d4d4d4" stroke-width="1.5"/>
<line x1="1216.8" y1="652.5" x2="1216.8" y2="1272.6" stroke="#d4d4d4" stroke-width="1.5"/>
<line x1="1375.7" y1="652.5" x2="1375.7" y2="1272.6" stroke="#d4d4d4" stroke-width="1.5"/>
<line x1="1534.6" y1="652.5" x2="1534.6" y2="1272.6" stroke="#d4d4d4" stroke-width="1.5"/>
<line x1="1693.0" y1="894.3" x2="1693.0" y2="1272.6" stroke="#d4d4d4" stroke-width="1.5"/>
<rect x="91.3" y="1050.9" width="2.2" height="39.1" fill="#217346"/>
<text x="99.9" y="687.4" font-size="33.5" fill="#000" textLength="426.8" lengthAdjust="spacingAndGlyphs" stroke="#000" stroke-width="0.8">General Battery Information </text>
<rect x="99.9" y="691.0" width="426.8" height="2.6" fill="#000"/>
<text x="98.7" y="767.6" font-size="25" font-weight="bold" fill="#000" textLength="162.0" lengthAdjust="spacingAndGlyphs">Serial number</text>
<text x="98.7" y="806.7" font-size="25" font-weight="bold" fill="#000" textLength="268.0" lengthAdjust="spacingAndGlyphs">Description by Enduser</text>
<text x="98.7" y="845.9" font-size="25" font-weight="bold" fill="#000" textLength="390.1" lengthAdjust="spacingAndGlyphs">Timestamp of the retrieve of data</text>
<text x="98.7" y="885.0" font-size="25" font-weight="bold" fill="#000" textLength="406.9" lengthAdjust="spacingAndGlyphs">Time of initialization of the module</text>
<text x="98.7" y="924.1" font-size="25" font-weight="bold" fill="#000" textLength="566.3" lengthAdjust="spacingAndGlyphs">GPS Coordinates for this measuring cycle WGS84</text>
<text x="98.7" y="963.3" font-size="25" font-weight="bold" fill="#000" textLength="493.4" lengthAdjust="spacingAndGlyphs">Actual Status (User configured Thresholds)</text>
<text x="98.7" y="1002.4" font-size="25" font-weight="bold" fill="#000" textLength="206.0" lengthAdjust="spacingAndGlyphs">Actual Voltage [V]</text>
<text x="98.7" y="1041.6" font-size="25" font-weight="bold" fill="#000" textLength="276.5" lengthAdjust="spacingAndGlyphs">Actual Temperature [°C]</text>
<text x="98.7" y="1080.7" font-size="25" font-weight="bold" fill="#000" textLength="205.4" lengthAdjust="spacingAndGlyphs">Software Revision</text>
<text x="98.7" y="1119.8" font-size="25" font-weight="bold" fill="#000" textLength="190.6" lengthAdjust="spacingAndGlyphs">min. Voltage  [V]</text>
<text x="98.7" y="1159.0" font-size="25" font-weight="bold" fill="#000" textLength="192.7" lengthAdjust="spacingAndGlyphs">max. voltage  [V]</text>
<text x="98.7" y="1198.1" font-size="25" font-weight="bold" fill="#000" textLength="252.8" lengthAdjust="spacingAndGlyphs">min. Temperature  [V]</text>
<text x="98.7" y="1237.3" font-size="25" font-weight="bold" fill="#000" textLength="257.3" lengthAdjust="spacingAndGlyphs">max. Temperature  [V]</text>
<text x="706.3" y="767.6" font-size="24" fill="#000" textLength="201.5" lengthAdjust="spacingAndGlyphs">L007-0000000109</text>
<text x="894.0" y="845.9" font-size="24" text-anchor="end" fill="#000" textLength="136.0" lengthAdjust="spacingAndGlyphs">24/04/2021</text>
<text x="894.0" y="885.0" font-size="24" text-anchor="end" fill="#000" textLength="136.0" lengthAdjust="spacingAndGlyphs">28/06/2019</text>
<text x="911.6" y="885.0" font-size="24" fill="#000" textLength="102.0" lengthAdjust="spacingAndGlyphs">02:00:00</text>
<text x="706.3" y="924.1" font-size="24" fill="#000" textLength="66.3" lengthAdjust="spacingAndGlyphs">North</text>
<text x="1052.8" y="924.1" font-size="24" text-anchor="end" fill="#000" textLength="92.7" lengthAdjust="spacingAndGlyphs">Latitude</text>
<text x="1063.8" y="924.1" font-size="24" fill="#000" textLength="46.6" lengthAdjust="spacingAndGlyphs">East</text>
<text x="1370.9" y="924.1" font-size="24" text-anchor="end" fill="#000" textLength="115.2" lengthAdjust="spacingAndGlyphs">Longitude</text>
<text x="894.0" y="963.3" font-size="24" text-anchor="end" fill="#000" textLength="116.0" lengthAdjust="spacingAndGlyphs">WARNING</text>
<text x="894.0" y="1002.4" font-size="24" text-anchor="end" fill="#000" textLength="76.5" lengthAdjust="spacingAndGlyphs">12.962</text>
<text x="894.0" y="1041.6" font-size="24" text-anchor="end" fill="#000" textLength="26.5" lengthAdjust="spacingAndGlyphs">21</text>
<text x="894.0" y="1080.7" font-size="24" text-anchor="end" fill="#000" textLength="36.0" lengthAdjust="spacingAndGlyphs">0.0</text>
<text x="888.0" y="1119.8" font-size="24" text-anchor="end" fill="#000" textLength="76.5" lengthAdjust="spacingAndGlyphs">11.736</text>
<text x="888.0" y="1159.0" font-size="24" text-anchor="end" fill="#000" textLength="76.5" lengthAdjust="spacingAndGlyphs">14.450</text>
<text x="894.0" y="1198.1" font-size="24" text-anchor="end" fill="#000" textLength="21.0" lengthAdjust="spacingAndGlyphs">-1</text>
<text x="894.0" y="1237.3" font-size="24" text-anchor="end" fill="#000" textLength="26.5" lengthAdjust="spacingAndGlyphs">30</text>
<text x="1540.8" y="885.0" font-size="24" fill="#000" textLength="204.4" lengthAdjust="spacingAndGlyphs">[Production Date]</text>
<text x="1540.8" y="963.3" font-size="24" fill="#000" textLength="83.7" lengthAdjust="spacingAndGlyphs">[status]</text>
<text x="1540.8" y="1002.4" font-size="24" fill="#000" textLength="99.8" lengthAdjust="spacingAndGlyphs">[voltage]</text>
<text x="1540.8" y="845.9" font-size="24" fill="#000" textLength="140.0" lengthAdjust="spacingAndGlyphs">[Timestamp]</text>
<polygon points="688,817 700.2,817 700.2,829.5" fill="#e8101c"/>
</g>
<rect x="798.2" y="373.7" width="1327.8" height="474.6" fill="#ea0c18"/>
<rect x="802.0" y="377.0" width="1320.5" height="467.0" fill="#fff"/>
<g clip-path="url(#c3)">
<line x1="802.0" y1="412.4" x2="2122.5" y2="412.4" stroke="#d4d4d4" stroke-width="1.4"/>
<line x1="802.0" y1="441.8" x2="2122.5" y2="441.8" stroke="#d4d4d4" stroke-width="1.4"/>
<line x1="802.0" y1="471.7" x2="2122.5" y2="471.7" stroke="#d4d4d4" stroke-width="1.4"/>
<line x1="1252.2" y1="377.0" x2="1252.2" y2="481.0" stroke="#d4d4d4" stroke-width="1.4"/>
<line x1="1401.5" y1="377.0" x2="1401.5" y2="481.0" stroke="#d4d4d4" stroke-width="1.4"/>
<line x1="1520.5" y1="377.0" x2="1520.5" y2="441.8" stroke="#d4d4d4" stroke-width="1.4"/>
<line x1="1520.5" y1="471.7" x2="1520.5" y2="481.0" stroke="#d4d4d4" stroke-width="1.4"/>
<line x1="1639.4" y1="377.0" x2="1639.4" y2="481.0" stroke="#d4d4d4" stroke-width="1.4"/>
<line x1="1759.0" y1="377.0" x2="1759.0" y2="481.0" stroke="#d4d4d4" stroke-width="1.4"/>
<line x1="1878.0" y1="377.0" x2="1878.0" y2="481.0" stroke="#d4d4d4" stroke-width="1.4"/>
<line x1="1997.0" y1="377.0" x2="1997.0" y2="481.0" stroke="#d4d4d4" stroke-width="1.4"/>
<line x1="2116.0" y1="377.0" x2="2116.0" y2="481.0" stroke="#d4d4d4" stroke-width="1.4"/>
<line x1="2116.0" y1="481.0" x2="2116.0" y2="844.0" stroke="#d9d9d9" stroke-width="1.4"/>
<line x1="2116.0" y1="501.3" x2="2122.5" y2="501.3" stroke="#d4d4d4" stroke-width="1.4"/>
<line x1="2116.0" y1="531.0" x2="2122.5" y2="531.0" stroke="#d4d4d4" stroke-width="1.4"/>
<line x1="2116.0" y1="560.6" x2="2122.5" y2="560.6" stroke="#d4d4d4" stroke-width="1.4"/>
<line x1="2116.0" y1="590.3" x2="2122.5" y2="590.3" stroke="#d4d4d4" stroke-width="1.4"/>
<line x1="2116.0" y1="619.9" x2="2122.5" y2="619.9" stroke="#d4d4d4" stroke-width="1.4"/>
<line x1="2116.0" y1="649.6" x2="2122.5" y2="649.6" stroke="#d4d4d4" stroke-width="1.4"/>
<line x1="2116.0" y1="679.2" x2="2122.5" y2="679.2" stroke="#d4d4d4" stroke-width="1.4"/>
<line x1="2116.0" y1="708.9" x2="2122.5" y2="708.9" stroke="#d4d4d4" stroke-width="1.4"/>
<line x1="2116.0" y1="738.5" x2="2122.5" y2="738.5" stroke="#d4d4d4" stroke-width="1.4"/>
<line x1="2116.0" y1="768.2" x2="2122.5" y2="768.2" stroke="#d4d4d4" stroke-width="1.4"/>
<line x1="2116.0" y1="797.8" x2="2122.5" y2="797.8" stroke="#d4d4d4" stroke-width="1.4"/>
<line x1="2116.0" y1="827.5" x2="2122.5" y2="827.5" stroke="#d4d4d4" stroke-width="1.4"/>
<line x1="2116.0" y1="857.1" x2="2122.5" y2="857.1" stroke="#d4d4d4" stroke-width="1.4"/>
<line x1="2116.0" y1="886.8" x2="2122.5" y2="886.8" stroke="#d4d4d4" stroke-width="1.4"/>
<line x1="802.0" y1="481.0" x2="2116.0" y2="481.0" stroke="#d9d9d9" stroke-width="1.6"/>
<text x="802.4" y="402.9" font-size="27" fill="#000" textLength="425.9" lengthAdjust="spacingAndGlyphs" stroke="#000" stroke-width="0.6">Long Term Log  L007-0000000109</text>
<rect x="803.5" y="405.8" width="427.3" height="2.2" fill="#000"/>
<text x="802.0" y="464.2" font-size="18.5" font-weight="bold" fill="#000" textLength="310.8" lengthAdjust="spacingAndGlyphs">Lograte in seconds for Longterm log</text>
<text x="1397.8" y="464.2" font-size="17.5" text-anchor="end" fill="#000" textLength="42.6" lengthAdjust="spacingAndGlyphs">3600</text>
<text x="1406.3" y="464.2" font-size="17.5" fill="#000" textLength="148.3" lengthAdjust="spacingAndGlyphs">seconds /interval</text>
<text x="1290.6" y="522.0" font-size="24.5" fill="#595959" textLength="332.6" lengthAdjust="spacingAndGlyphs">Voltage Log L007-0000000109</text>
<line x1="910.5" y1="553.8" x2="2079.5" y2="553.8" stroke="#d9d9d9" stroke-width="1.6"/>
<line x1="910.5" y1="663.5" x2="2079.5" y2="663.5" stroke="#d9d9d9" stroke-width="1.6"/>
<line x1="910.5" y1="718.3" x2="2079.5" y2="718.3" stroke="#d9d9d9" stroke-width="1.6"/>
<line x1="910.5" y1="773.2" x2="2079.5" y2="773.2" stroke="#d9d9d9" stroke-width="1.6"/>
<line x1="910.5" y1="828.0" x2="2079.5" y2="828.0" stroke="#d9d9d9" stroke-width="1.6"/>
<text x="893.2" y="557.8" font-size="16.5" text-anchor="end" fill="#595959" textLength="16.0" lengthAdjust="spacingAndGlyphs">16</text>
<text x="893.2" y="612.6" font-size="16.5" text-anchor="end" fill="#595959" textLength="16.0" lengthAdjust="spacingAndGlyphs">14</text>
<text x="893.2" y="667.5" font-size="16.5" text-anchor="end" fill="#595959" textLength="16.0" lengthAdjust="spacingAndGlyphs">12</text>
<text x="893.2" y="722.3" font-size="16.5" text-anchor="end" fill="#595959" textLength="16.0" lengthAdjust="spacingAndGlyphs">10</text>
<text x="893.2" y="777.2" font-size="16.5" text-anchor="end" fill="#595959" textLength="8.3" lengthAdjust="spacingAndGlyphs">8</text>
<text x="893.2" y="832.0" font-size="16.5" text-anchor="end" fill="#595959" textLength="8.3" lengthAdjust="spacingAndGlyphs">6</text>
<line x1="910.5" y1="594.9" x2="2079.5" y2="594.9" stroke="#e3262b" stroke-width="1.8"/>
<line x1="910.5" y1="745.8" x2="2079.5" y2="745.8" stroke="#e3262b" stroke-width="1.8"/>
<line x1="910.5" y1="690.9" x2="2079.5" y2="690.9" stroke="#ffc000" stroke-width="1.8"/>
<text transform="translate(842.5,774.5) rotate(-90)" font-size="16.5" text-anchor="middle" fill="#595959" textLength="87" lengthAdjust="spacingAndGlyphs">Voltage [V]</text>
<polyline fill="none" stroke="#4472c4" stroke-width="3.8" stroke-linejoin="round" stroke-linecap="round" points="910.5,654.6 917.3,654.6 919.0,619.6 920.7,643.4 925.8,646.8 930.8,648.5 932.5,629.8 934.2,651.9 935.9,614.5 937.0,648.5 941.0,646.8 944.4,638.3 945.4,667.1 946.1,662.1 966.5,662.7 986.2,662.1 986.8,624.7 988.5,651.9 993.6,652.6 1007.2,652.6 1008.2,629.8 1009.9,651.9 1012.3,638.3 1014.0,648.5 1027.6,649.2 1034.4,650.2 1036.7,623.0 1037.8,648.5 1039.4,648.5 1046.3,648.8 1053.1,649.5 1060.0,648.9 1066.8,649.7 1073.7,650.0 1080.5,650.7 1087.3,650.1 1094.2,650.9 1101.0,651.6 1107.9,651.9 1114.7,651.8 1121.6,652.1 1128.4,652.4 1135.2,652.2 1142.1,653.4 1148.9,653.7 1155.8,653.6 1162.6,653.9 1169.5,653.7 1176.3,654.9 1183.1,654.8 1190.0,655.5 1196.8,655.4 1203.7,655.7 1210.5,656.4 1217.4,656.7 1224.2,657.0 1231.0,656.4 1237.9,657.6 1244.7,657.5 1251.6,657.8 1258.4,657.6 1265.3,658.8 1272.1,659.1 1278.9,658.5 1285.8,658.8 1292.6,659.6 1299.5,659.9 1306.3,660.2 1313.1,660.5 1320.0,660.8 1326.8,660.6 1333.7,661.8 1340.5,661.7 1347.4,662.4 1354.2,661.8 1361.0,662.6 1367.9,662.9 1374.7,663.6 1381.6,663.9 1388.4,663.8 1395.3,664.1 1402.1,664.8 1408.9,664.2 1415.8,665.0 1422.6,664.8 1429.5,665.6 1436.3,665.9 1443.2,666.6 1450.0,666.9 1451.6,666.5 1453.3,641.7 1455.0,666.5 1463.5,666.5 1465.2,617.9 1466.9,650.2 1475.4,651.9 1478.8,650.2 1482.2,655.3 1483.9,612.8 1485.6,660.4 1497.5,659.3 1499.8,631.5 1501.5,657.0 1517.8,657.0 1536.5,658.0 1538.2,641.7 1539.9,658.0 1544.3,651.9 1546.7,624.7 1548.4,648.5 1551.8,653.6 1565.3,651.9 1568.7,628.1 1570.4,648.5 1572.8,655.3 1575.5,645.1 1577.2,660.4 1582.3,660.4 1584.0,641.7 1585.7,662.1 1587.4,655.3 1609.4,655.9 1611.1,629.8 1612.8,660.4 1617.9,658.7 1619.6,631.5 1621.3,655.3 1624.7,663.8 1633.2,662.1 1636.6,641.7 1638.3,665.4 1641.7,658.7 1644.1,670.5 1646.1,648.5 1647.8,604.4 1650.2,606.1 1651.9,604.4 1652.6,665.4 1653.6,660.4 1660.4,660.4 1662.1,651.9 1663.8,660.4 1687.5,661.4 1688.5,641.7 1690.2,658.7 1692.6,651.9 1695.0,621.3 1697.0,638.3 1699.4,648.5 1704.5,650.2 1710.7,649.9 1716.9,650.1 1723.1,650.4 1729.2,651.5 1735.4,651.8 1741.6,651.6 1747.8,651.8 1754.0,651.6 1760.2,652.3 1766.4,652.5 1772.6,653.2 1778.8,653.0 1785.0,653.7 1791.2,653.9 1797.4,653.7 1803.6,654.0 1809.7,654.2 1815.9,653.9 1822.1,654.7 1828.3,655.3 1834.5,655.2 1840.7,655.4 1846.9,655.6 1853.1,656.3 1859.3,656.5 1865.5,656.3 1871.7,656.6 1877.9,657.2 1884.0,657.1 1890.2,657.3 1896.4,657.5 1902.6,658.2 1908.8,658.0 1915.0,658.6 1921.2,658.5 1927.4,659.1 1933.6,658.4 1939.8,659.2 1946.0,659.4 1952.2,659.7 1958.4,659.9 1964.5,660.1 1970.7,660.8 1976.9,661.0 1983.1,661.2 1989.3,660.6 1995.5,661.3 2001.7,661.6 2007.9,661.8 2014.1,662.4 2020.3,661.8 2026.5,662.0 2032.7,662.7 2038.8,663.0 2045.0,663.2 2051.2,663.0 2057.4,663.2 2063.6,663.9 2069.8,663.7 2076.0,664.4 2076.8,595.9 2077.8,614.0 2079.0,640.0"/>
<line x1="910.5" y1="608.6" x2="2079.5" y2="608.6" stroke="#ffc000" stroke-width="1.8"/>
</g>
<rect x="1103.2" y="1019.5" width="1022.8" height="453.5" fill="#7f7f7f"/>
<rect x="1107.5" y="1023.7" width="1014.3" height="445.6" fill="#fff"/>
<g clip-path="url(#c4)">
<rect x="1107.5" y="1023.7" width="67.8" height="445.6" fill="#f3f3f3"/>
<line x1="1107.5" y1="1070.3" x2="2121.8" y2="1070.3" stroke="#d4d4d4" stroke-width="1.5"/>
<line x1="1107.5" y1="1110.2" x2="2121.8" y2="1110.2" stroke="#d4d4d4" stroke-width="1.5"/>
<line x1="1107.5" y1="1150.1" x2="2121.8" y2="1150.1" stroke="#d4d4d4" stroke-width="1.5"/>
<line x1="1107.5" y1="1190.0" x2="2121.8" y2="1190.0" stroke="#d4d4d4" stroke-width="1.5"/>
<line x1="1107.5" y1="1229.9" x2="2121.8" y2="1229.9" stroke="#d4d4d4" stroke-width="1.5"/>
<line x1="1107.5" y1="1269.8" x2="2121.8" y2="1269.8" stroke="#d4d4d4" stroke-width="1.5"/>
<line x1="1107.5" y1="1309.7" x2="2121.8" y2="1309.7" stroke="#d4d4d4" stroke-width="1.5"/>
<line x1="1107.5" y1="1349.6" x2="2121.8" y2="1349.6" stroke="#d4d4d4" stroke-width="1.5"/>
<line x1="1107.5" y1="1389.5" x2="2121.8" y2="1389.5" stroke="#d4d4d4" stroke-width="1.5"/>
<line x1="1107.5" y1="1429.4" x2="2121.8" y2="1429.4" stroke="#d4d4d4" stroke-width="1.5"/>
<line x1="1107.5" y1="1469.3" x2="2121.8" y2="1469.3" stroke="#d4d4d4" stroke-width="1.5"/>
<line x1="1175.3" y1="1023.7" x2="1175.3" y2="1469.3" stroke="#c8c8c8" stroke-width="1.5"/>
<line x1="1795.2" y1="1023.7" x2="1795.2" y2="1469.3" stroke="#d4d4d4" stroke-width="1.5"/>
<line x1="1998.6" y1="1023.7" x2="1998.6" y2="1469.3" stroke="#d4d4d4" stroke-width="1.5"/>
<text x="1137.8" y="1060.9" font-size="24.5" text-anchor="middle" fill="#666" textLength="26.7" lengthAdjust="spacingAndGlyphs">22</text>
<text x="1137.8" y="1100.8" font-size="24.5" text-anchor="middle" fill="#666" textLength="26.7" lengthAdjust="spacingAndGlyphs">23</text>
<text x="1137.8" y="1140.7" font-size="24.5" text-anchor="middle" fill="#666" textLength="26.7" lengthAdjust="spacingAndGlyphs">24</text>
<text x="1137.8" y="1180.6" font-size="24.5" text-anchor="middle" fill="#666" textLength="26.7" lengthAdjust="spacingAndGlyphs">25</text>
<text x="1137.8" y="1220.5" font-size="24.5" text-anchor="middle" fill="#666" textLength="26.7" lengthAdjust="spacingAndGlyphs">26</text>
<text x="1137.8" y="1260.4" font-size="24.5" text-anchor="middle" fill="#666" textLength="26.7" lengthAdjust="spacingAndGlyphs">27</text>
<text x="1137.8" y="1300.3" font-size="24.5" text-anchor="middle" fill="#666" textLength="26.7" lengthAdjust="spacingAndGlyphs">28</text>
<text x="1137.8" y="1340.2" font-size="24.5" text-anchor="middle" fill="#666" textLength="26.7" lengthAdjust="spacingAndGlyphs">29</text>
<text x="1137.8" y="1380.1" font-size="24.5" text-anchor="middle" fill="#666" textLength="26.7" lengthAdjust="spacingAndGlyphs">30</text>
<text x="1137.8" y="1420.0" font-size="24.5" text-anchor="middle" fill="#666" textLength="26.7" lengthAdjust="spacingAndGlyphs">31</text>
<text x="1137.8" y="1459.9" font-size="24.5" text-anchor="middle" fill="#666" textLength="26.7" lengthAdjust="spacingAndGlyphs">32</text>
<text x="1183.5" y="1058.6" font-size="33" font-weight="bold" fill="#000" textLength="164.5" lengthAdjust="spacingAndGlyphs">Thresholds</text>
<rect x="1183.5" y="1061.9" width="169.5" height="2.9" fill="#000"/>
<text x="1182.3" y="1140.8" font-size="25" font-weight="bold" fill="#000" textLength="254.7" lengthAdjust="spacingAndGlyphs">Error Voltage High [V]</text>
<text x="1993.0" y="1140.8" font-size="24" text-anchor="end" fill="#000" textLength="49.5" lengthAdjust="spacingAndGlyphs">14.5</text>
<text x="1182.3" y="1180.7" font-size="25" font-weight="bold" fill="#000" textLength="294.9" lengthAdjust="spacingAndGlyphs">Warning Voltage High [V]</text>
<text x="1993.0" y="1180.7" font-size="24" text-anchor="end" fill="#000" textLength="26.5" lengthAdjust="spacingAndGlyphs">14</text>
<text x="1182.3" y="1220.6" font-size="25" font-weight="bold" fill="#000" textLength="289.7" lengthAdjust="spacingAndGlyphs">Warning Voltage Low [V]</text>
<text x="1993.0" y="1220.6" font-size="24" text-anchor="end" fill="#000" textLength="26.5" lengthAdjust="spacingAndGlyphs">11</text>
<text x="1182.3" y="1260.5" font-size="25" font-weight="bold" fill="#000" textLength="249.2" lengthAdjust="spacingAndGlyphs">Error Voltage Low [V]</text>
<text x="1993.0" y="1260.5" font-size="24" text-anchor="end" fill="#000" textLength="13.0" lengthAdjust="spacingAndGlyphs">9</text>
<text x="1182.3" y="1300.4" font-size="25" font-weight="bold" fill="#000" textLength="327.0" lengthAdjust="spacingAndGlyphs">Error Temperature High [°C]</text>
<text x="1993.0" y="1300.4" font-size="24" text-anchor="end" fill="#000" textLength="26.5" lengthAdjust="spacingAndGlyphs">30</text>
<text x="1182.3" y="1340.3" font-size="25" font-weight="bold" fill="#000" textLength="381.4" lengthAdjust="spacingAndGlyphs">Warning Temperature High   [°C]</text>
<text x="1993.0" y="1340.3" font-size="24" text-anchor="end" fill="#000" textLength="26.5" lengthAdjust="spacingAndGlyphs">25</text>
<text x="1182.3" y="1380.2" font-size="25" font-weight="bold" fill="#000" textLength="368.9" lengthAdjust="spacingAndGlyphs">Warning Temperature Low  [°C]</text>
<text x="1993.0" y="1380.2" font-size="24" text-anchor="end" fill="#000" textLength="26.5" lengthAdjust="spacingAndGlyphs">10</text>
<text x="1182.3" y="1420.1" font-size="25" font-weight="bold" fill="#000" textLength="327.7" lengthAdjust="spacingAndGlyphs">Error Temperature Low  [°C]</text>
<text x="1993.0" y="1420.1" font-size="24" text-anchor="end" fill="#000" textLength="13.0" lengthAdjust="spacingAndGlyphs">4</text>
</g>
</svg>
</body></html>
